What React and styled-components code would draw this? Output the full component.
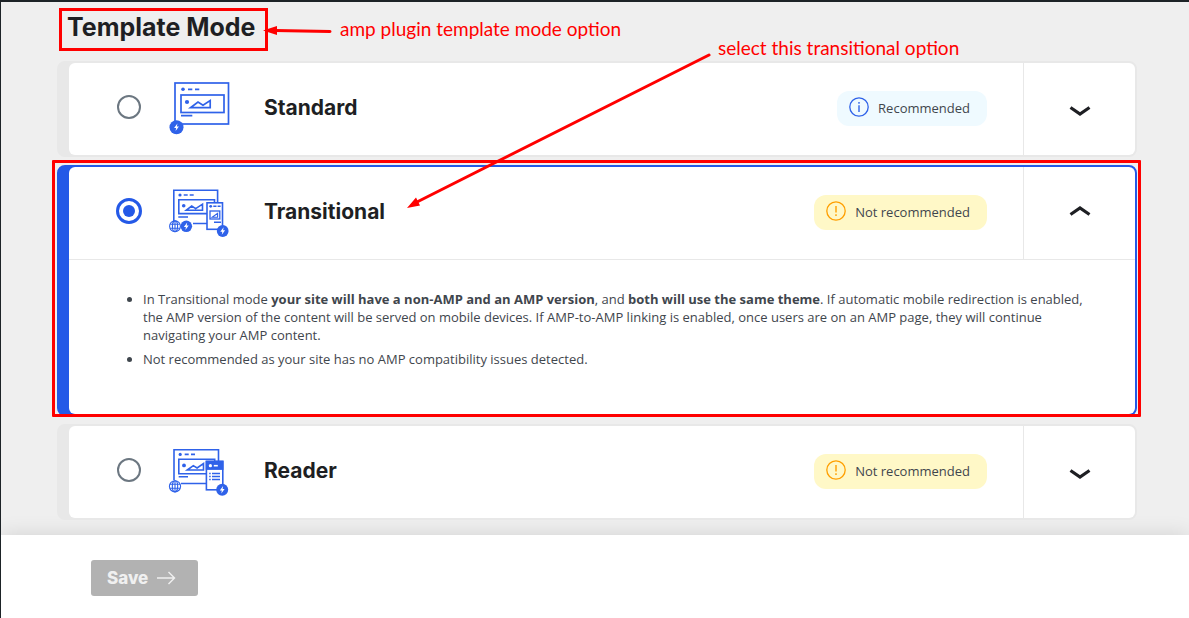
import React, { useState } from "react";
import styled, { createGlobalStyle } from "styled-components";

const BLUE = "#2459e7";
const ICON_BLUE = "#2f62e9";
const RED = "#ff0000";

const GlobalStyle = createGlobalStyle`
  *, *::before, *::after { box-sizing: border-box; }
  body {
    margin: 0;
    background: #ffffff;
    color: #1e1f23;
    font-family: "Open Sans", "Noto Sans", sans-serif;
    font-size: 13px;
    line-height: 18px;
  }
`;

const Page = styled.div`
  position: relative;
  display: flex;
  flex-direction: column;
  min-height: 100vh;
  border-top: 2px solid #1d2327;
  border-left: 1px solid #1d2327;
  overflow: hidden;
`;

const Main = styled.main`
  padding: 6px 52px 15px 56px;
  background: #efefef;
`;

const Heading = styled.h1`
  width: fit-content;
  margin: 0 0 10px 2px;
  padding: 0 9px 5px 5px;
  border: 3px solid ${RED};
  font-family: Inter, "Open Sans", sans-serif;
  font-size: 25px;
  font-weight: 700;
  line-height: 32px;
`;

const Options = styled.div`
  display: flex;
  flex-direction: column;
  gap: 8px;
`;

const Card = styled.section`
  position: relative;
  border: 2px solid ${(p) => (p.$active ? BLUE : "#e8e8e8")};
  border-left-width: 12px;
  border-radius: 8px;
  background: ${(p) => (p.$active ? BLUE : "#e8e8e8")};
`;

const CardBody = styled.div`
  border-radius: 6px;
  background: #ffffff;
`;

const Highlight = styled.div`
  position: absolute;
  inset: -7px -6px -3px -17px;
  border: 3px solid ${RED};
  border-radius: 1px;
  pointer-events: none;
`;

const CardHeader = styled.div`
  display: flex;
  height: 92px;
`;

const OptionLabel = styled.label`
  display: flex;
  flex: 1;
  align-items: center;
  padding: 0 36px 4px 47px;
  cursor: pointer;
`;

const Radio = styled.input`
  display: grid;
  place-items: center;
  flex: none;
  appearance: none;
  width: 24px;
  height: 24px;
  margin: 0 27px 0 1px;
  border: 2px solid #6c7781;
  border-radius: 50%;
  background: #ffffff;

  &:checked {
    width: 26px;
    height: 26px;
    margin: 0 26px 0 0;
    border: 3px solid ${BLUE};
  }

  &:checked::before {
    content: "";
    width: 12px;
    height: 12px;
    border-radius: 50%;
    background: ${BLUE};
  }
`;

const Illustration = styled.svg`
  flex: none;
  width: 64px;
  height: 60px;
  fill: none;
  stroke: ${ICON_BLUE};
`;

const Title = styled.span`
  margin: 2px 0 0 32px;
  font-family: Inter, "Open Sans", sans-serif;
  font-size: 21px;
  font-weight: 700;
  line-height: 24px;
`;

const Badge = styled.span`
  display: flex;
  align-items: center;
  gap: 9px;
  height: 35px;
  margin: 2px 0 0 auto;
  padding: 0 17px 0 12px;
  border-radius: 12px;
  background: ${(p) => (p.$warning ? "#fff8c7" : "#effaff")};
  color: #3f464d;
  white-space: nowrap;
`;

const BadgeSvg = styled.svg`
  width: 20px;
  height: 20px;
  margin-bottom: 2px;
  fill: none;
  stroke: ${(p) => (p.$warning ? "#ff9f00" : ICON_BLUE)};
`;

const Toggle = styled.button`
  display: grid;
  place-items: center;
  width: 112px;
  border: 0;
  border-left: 1px solid #e8e8e8;
  background: transparent;
  color: #1e1f23;
  cursor: pointer;
`;

const Chevron = styled.svg`
  width: 24px;
  height: 24px;
  transform: ${(p) => (p.$up ? "rotate(180deg)" : "none")};
`;

const Details = styled.ul`
  display: flex;
  flex-direction: column;
  gap: 6px;
  margin: 0;
  padding: 30px 46px 46px 74px;
  border-top: 1px solid #e8e8e8;
  color: #3f464d;

  b {
    font-weight: 700;
  }
`;

const Footer = styled.footer`
  flex: 1;
  padding: 25px 90px;
  background: #ffffff;
  box-shadow: 0 0 20px rgba(0, 0, 0, 0.12);
`;

const SaveButton = styled.button`
  display: flex;
  align-items: center;
  gap: 8px;
  height: 36px;
  padding: 0 22px 0 16px;
  border: 0;
  border-radius: 3px;
  background: #b2b2b2;
  color: #f0f0f0;
  font-family: Inter, "Open Sans", sans-serif;
  font-size: 17px;
  font-weight: 800;
`;

const Note = styled.p`
  position: absolute;
  top: ${(p) => p.$top}px;
  left: ${(p) => p.$left}px;
  margin: 0;
  color: ${RED};
  font-family: Lato, sans-serif;
  font-size: 19px;
  line-height: 24px;
  white-space: nowrap;
  pointer-events: none;
`;

const Arrows = styled.svg`
  position: absolute;
  top: 0;
  left: 0;
  width: 760px;
  height: 240px;
  pointer-events: none;
`;

function AmpMark({ x, y, r }) {
  return (
    <g transform={`translate(${x} ${y})`} stroke="none">
      <circle r={r} fill={ICON_BLUE} />
      <path d="M.9-3.8-2.4.7H-.4L-.9 3.8 2.4-.7H.4Z" fill="#fff" />
    </g>
  );
}

function Globe({ x, y, r }) {
  return (
    <g transform={`translate(${x} ${y})`} strokeWidth="1.1">
      <circle r={r} fill="#fff" />
      <ellipse rx={r * 0.48} ry={r} />
      <path d={`M0-${r}V${r}M-${r - 0.6}-2H${r - 0.6}M-${r - 0.6} 2H${r - 0.6}`} />
    </g>
  );
}

function StandardArt() {
  return (
    <Illustration viewBox="0 0 64 60" aria-hidden="true">
      <g transform="translate(2 4)" strokeWidth="1.7">
        <rect x="5" y="2" width="53.500" height="41" />
        <path d="M18 8.3h4.3M25 8.3h4.3M11 34.7h11.3" />
        <rect x="11" y="14" width="43" height="17.5" />
        <path d="M20.5 26.7 28 21l5 3.2 7.2-4.7v7.2Z" />
        <circle cx="13" cy="8.3" r="1.8" fill={ICON_BLUE} stroke="none" />
        <circle cx="17" cy="21" r="2.1" fill={ICON_BLUE} stroke="none" />
        <AmpMark x={6.5} y={46.3} r={7} />
      </g>
    </Illustration>
  );
}

function TransitionalArt() {
  return (
    <Illustration viewBox="0 0 64 60" aria-hidden="true">
      <g transform="translate(0 6)" strokeWidth="1.6">
        <path d="M5.8 34V3.3h43.8V15M25 36.5h14" />
        <path d="M15.7 8h4M21.7 8h4M10.3 30H20" />
        <path d="M46.5 15.5v-2.7H10.8v13.8H39" />
        <path d="m18.3 23.2 5.4-4.2 4 2.6 6.8-4.4v6Z" />
        <circle cx="12" cy="8" r="1.6" fill={ICON_BLUE} stroke="none" />
        <circle cx="15.7" cy="18.8" r="1.8" fill={ICON_BLUE} stroke="none" />
        <rect x="39" y="15.8" width="15.5" height="26.5" fill="#fff" />
        <path d="M45.3 19.3h3.2M49.6 19.3h3M46 35.3h7" />
        <rect x="42" y="24" width="9.8" height="8" strokeWidth="1.3" />
        <path d="m44.2 30.3 5.4-4v4Z" strokeWidth="1.1" />
        <circle cx="42.7" cy="19.3" r="1.4" fill={ICON_BLUE} stroke="none" />
        <Globe x={7} y={39.3} r={5.4} />
        <AmpMark x={18.3} y={39.3} r={5.8} />
        <AmpMark x={54.7} y={44} r={5.9} />
      </g>
    </Illustration>
  );
}

function ReaderArt() {
  return (
    <Illustration viewBox="0 0 64 60" aria-hidden="true">
      <g transform="translate(0 4)" strokeWidth="1.6">
        <path d="M6 36V5.7h44.5V17M13 39.5h25" />
        <path d="M16.7 10.4h4M23 10.4h4M10.7 32.7H20" />
        <path d="M46.7 17v-1.7H10.8v14.4H38" />
        <path d="m19.3 26 6-4.4 3.8 2.4 6.4-4.4V26Z" />
        <circle cx="12.2" cy="10.4" r="1.6" fill={ICON_BLUE} stroke="none" />
        <circle cx="16" cy="21.4" r="1.9" fill={ICON_BLUE} stroke="none" />
        <rect x="38.4" y="17.4" width="16.4" height="28.4" fill="#fff" />
        <path d="M37.7 16.7h17.8v9.2H37.7Z" fill={ICON_BLUE} stroke="none" />
        <circle cx="42.4" cy="21.7" r="1.6" fill="#fff" stroke="none" />
        <path d="M45.8 21.7h4" stroke="#fff" />
        <path d="M41.2 29.5h1.5M44 29.5h8M41.2 32.5h1.5M44 32.5h8M41.2 35.5h1.5M44 35.5h8" strokeWidth="1.3" />
        <Globe x={7} y={42.3} r={5.6} />
        <AmpMark x={54.2} y={45.7} r={6} />
      </g>
    </Illustration>
  );
}

function BadgeIcon({ warning }) {
  return (
    <BadgeSvg viewBox="0 0 20 20" $warning={warning} aria-hidden="true">
      <circle cx="10" cy="10" r="9.2" strokeWidth="1.3" />
      {warning ? (
        <path d="M10 5v6.5M10 13.3v1.7" strokeWidth="1.4" />
      ) : (
        <path d="M10 8.3V15M10 5v1.7" strokeWidth="1.4" />
      )}
    </BadgeSvg>
  );
}

function Option({ id, title, art, warning, selected, onSelect, expanded, onToggle, highlighted, children }) {
  return (
    <Card $active={selected}>
      <CardBody>
        <CardHeader>
          <OptionLabel htmlFor={id}>
            <Radio type="radio" name="template-mode" id={id} checked={selected} onChange={onSelect} />
            {art}
            <Title>{title}</Title>
            <Badge $warning={warning}>
              <BadgeIcon warning={warning} />
              {warning ? "Not recommended" : "Recommended"}
            </Badge>
          </OptionLabel>
          <Toggle type="button" aria-expanded={expanded} aria-label={`${title} details`} onClick={onToggle}>
            <Chevron viewBox="0 0 24 24" $up={expanded} aria-hidden="true">
              <path d="m2.500 10.500 9.500 6.500 9.500-6.500" fill="none" stroke="currentColor" strokeWidth="3.2" />
            </Chevron>
          </Toggle>
        </CardHeader>
        {expanded && children}
      </CardBody>
      {highlighted && <Highlight />}
    </Card>
  );
}

export default function App() {
  const [mode, setMode] = useState("transitional");
  const [open, setOpen] = useState("transitional");
  const bind = (id) => ({
    id,
    selected: mode === id,
    onSelect: () => setMode(id),
    expanded: open === id,
    onToggle: () => setOpen(open === id ? "" : id),
  });

  return (
    <>
      <GlobalStyle />
      <Page>
        <Main>
          <Heading>Template Mode</Heading>
          <Options>
            <Option {...bind("standard")} title="Standard" art={<StandardArt />} />
            <Option {...bind("transitional")} title="Transitional" art={<TransitionalArt />} warning highlighted>
              <Details>
                <li>
                  In Transitional mode <b>your site will have a non-AMP and an AMP version</b>, and{" "}
                  <b>both will use the same theme</b>. If automatic mobile redirection is enabled, the AMP version of
                  the content will be served on mobile devices. If AMP-to-AMP linking is enabled, once users are on an
                  AMP page, they will continue navigating your AMP content.
                </li>
                <li>Not recommended as your site has no AMP compatibility issues detected.</li>
              </Details>
            </Option>
            <Option {...bind("reader")} title="Reader" art={<ReaderArt />} warning />
          </Options>
        </Main>
        <Footer>
          <SaveButton type="button">
            Save
            <svg width="20" height="14" viewBox="0 0 20 14" fill="none" stroke="currentColor" strokeWidth="1.4" aria-hidden="true">
              <path d="M1 7h17.500M12.500 1l6 6-6 6" />
            </svg>
          </SaveButton>
        </Footer>
        <Note $top={15} $left={339}>amp plugin template mode option</Note>
        <Note $top={34} $left={717}>select this transitional option</Note>
        <Arrows viewBox="0 0 760 240" aria-hidden="true">
          <g stroke={RED} strokeWidth="3" strokeLinecap="round">
            <path d="M274 28.500 329 29.500" />
            <path d="M416 200 708 53" />
          </g>
          <path d="M262 28.500 276 24v9ZM406 206l9-10.500 4 8Z" fill={RED} />
        </Arrows>
      </Page>
    </>
  );
}
